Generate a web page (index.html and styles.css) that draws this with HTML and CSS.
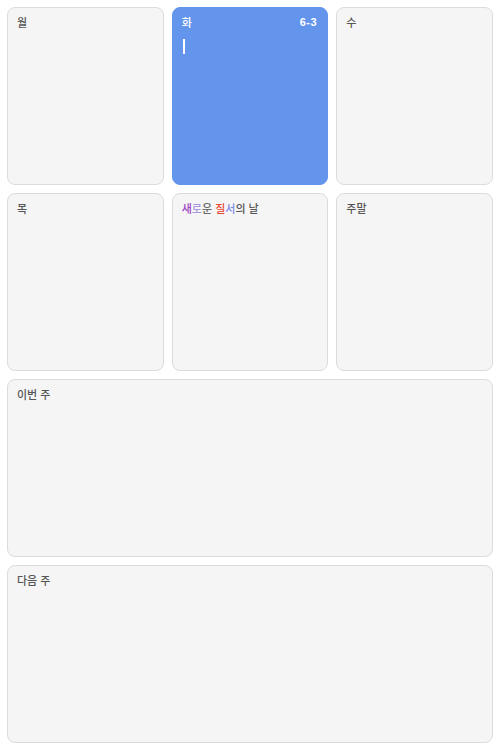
FILE: index.html
```html
<!DOCTYPE html>
<html lang="ko">
<head>
<meta charset="utf-8">
<link rel="stylesheet" href="styles.css">
</head>
<body>
<div class="grid">
  <div class="card"><div class="head"><span class="label">월</span></div></div>
  <div class="card active"><div class="head"><span class="label">화</span><span class="tag">6-3</span></div><div class="caret"></div></div>
  <div class="card"><div class="head"><span class="label">수</span></div></div>
  <div class="card"><div class="head"><span class="label">목</span></div></div>
  <div class="card"><div class="head"><span class="label"><span class="c1">새</span><span class="c2">로</span><span class="c3">운</span> <span class="c4">질</span><span class="c5">서</span>의 날</span></div></div>
  <div class="card"><div class="head"><span class="label">주말</span></div></div>
  <div class="card wide"><div class="head"><span class="label">이번 주</span></div></div>
  <div class="card wide"><div class="head"><span class="label">다음 주</span></div></div>
</div>
</body>
</html>
```
FILE: styles.css
```css
html, body {
  margin: 0;
  padding: 0;
  background: #ffffff;
}
body {
  font-family: "Noto Sans CJK KR", "Noto Sans", sans-serif;
  width: 500px;
  height: 750px;
  padding: 7px;
  box-sizing: border-box;
}
.grid {
  display: grid;
  grid-template-columns: repeat(3, 1fr);
  grid-template-rows: repeat(4, 178px);
  gap: 8px;
}
.card {
  background: #f5f5f5;
  border: 1px solid #dcdcdc;
  border-radius: 8px;
  box-sizing: border-box;
  padding: 7px 9px;
}
.card.wide {
  grid-column: 1 / span 3;
}
.card.active {
  background: #6495ed;
  border-color: #6495ed;
}
.head {
  display: flex;
  justify-content: space-between;
  align-items: center;
  font-size: 11px;
  line-height: 14px;
  font-weight: 500;
  color: #555555;
}
.active .head {
  color: #ffffff;
}
.tag {
  font-weight: bold;
  font-family: "Liberation Sans", "Noto Sans", sans-serif;
  font-size: 11px;
  letter-spacing: 0.6px;
  margin-right: 1px;
}
.caret {
  width: 2px;
  height: 15px;
  background: #ffffff;
  margin-top: 10px;
  margin-left: 1px;
}
.c1 { color: #9c3fc4; }
.c2 { color: #a89ae0; }
.c3 { color: #6a6a6a; }
.c4 { color: #e8442e; }
.c5 { color: #7d88ea; }
```
